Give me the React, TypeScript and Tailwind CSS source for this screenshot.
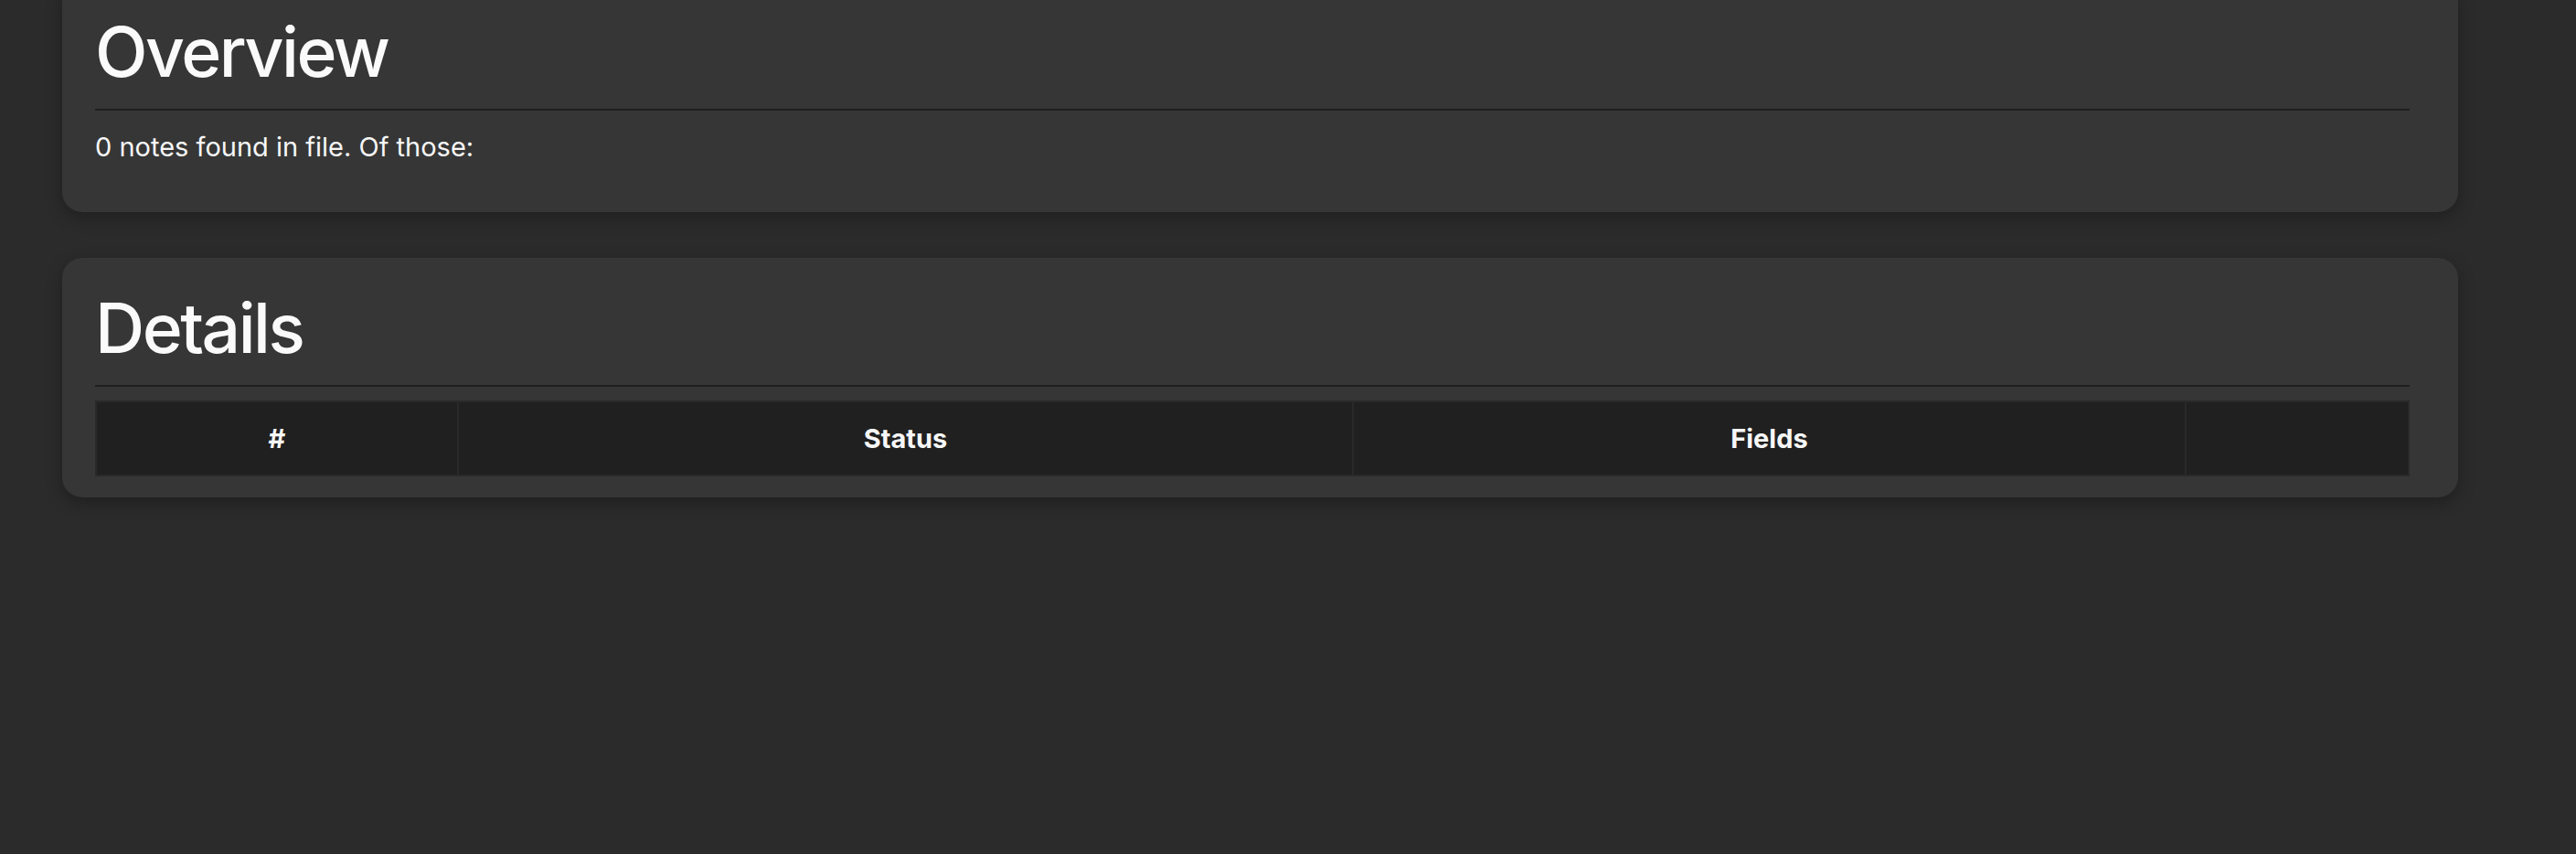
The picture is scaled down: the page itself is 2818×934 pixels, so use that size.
import React from "react";

const columns = [
  { label: "#", width: "w-[396px]" },
  { label: "Status", width: "w-[979px]" },
  { label: "Fields", width: "w-[911px]" },
  { label: "", width: "" },
];

const Card = ({ title, children, bottom }: { title: string; children: React.ReactNode; bottom: string }) => (
  <section
    className={`rounded-[22px] bg-[#363636] pl-[36px] pr-[53px] pt-[32px] ${bottom} shadow-[0_6px_18px_rgba(0,0,0,0.28)]`}
  >
    <h1 className="border-b-2 border-[#1f1f1f] pb-[17px] text-[75px] font-medium leading-[90px] tracking-[-2.5px] text-[#fafafa]">
      {title}
    </h1>
    {children}
  </section>
);

export default function App() {
  return (
    <div className="min-h-screen overflow-hidden bg-[#2b2b2b] font-['Inter','Liberation_Sans',sans-serif] text-[#f7f7f7]">
      <div className="-mt-[20px] ml-[68px] flex w-[2621px] flex-col gap-[50px]">
        <Card title="Overview" bottom="pb-[49px]">
          <p className="mt-[18px] text-[29px] leading-[44px]">0 notes found in file. Of those:</p>
        </Card>

        <Card title="Details" bottom="pb-[23px]">
          <table className="mt-[15px] w-full border-collapse border-2 border-[#292929]">
            <thead>
              <tr>
                {columns.map((c, i) => (
                  <th
                    key={i}
                    className={`${c.width} h-[81px] border-2 border-[#292929] bg-[#202020] text-center text-[29px] font-bold`}
                  >
                    {c.label}
                  </th>
                ))}
              </tr>
            </thead>
          </table>
        </Card>
      </div>
    </div>
  );
}
